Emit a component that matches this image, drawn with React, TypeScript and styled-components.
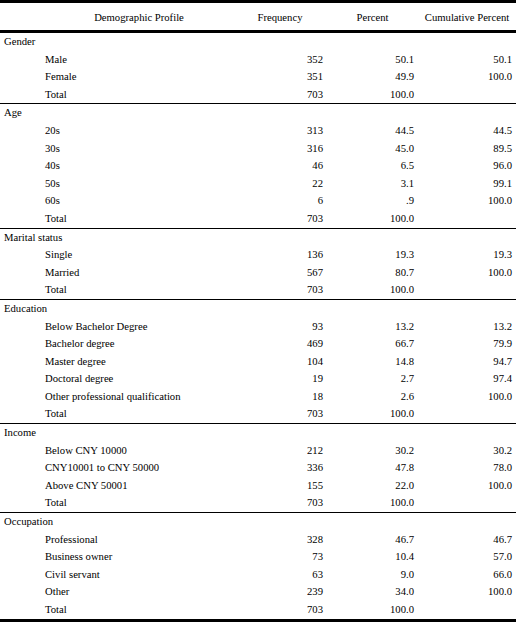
import React from "react";
import styled, { createGlobalStyle } from "styled-components";

const GlobalStyle = createGlobalStyle`
  html, body { margin: 0; padding: 0; background: #ffffff; }
`;

const COLS = "233px 94px 91px 98px";

const Table = styled.div`
  width: 516px;
  font-family: "Liberation Serif", "DejaVu Serif", serif;
  font-size: 10.67px;
  color: #000;
  border-top: 3px solid #000;
  border-bottom: 3px solid #000;
`;

const HeaderRow = styled.div`
  display: grid;
  grid-template-columns: ${COLS};
  height: 27px;
  align-items: center;
  border-bottom: 3px solid #000;
`;

const HeadCell = styled.div<{ $inset?: number }>`
  text-align: center;
  padding-left: ${(p) => p.$inset ?? 0}px;
  white-space: nowrap;
`;

const Section = styled.div<{ $last?: boolean }>`
  border-bottom: ${(p) => (p.$last ? "none" : "1px solid #000")};
`;

const CategoryRow = styled.div`
  height: 17.6px;
  line-height: 17.6px;
  padding-left: 4px;
  white-space: nowrap;
`;

const DataRow = styled.div`
  display: grid;
  grid-template-columns: ${COLS};
  height: 17.6px;
  line-height: 17.6px;
`;

const LabelCell = styled.div`
  padding-left: 45px;
  white-space: nowrap;
`;

const NumCell = styled.div`
  text-align: right;
  padding-right: 4px;
`;

type Row = [string, string, string, string];
type Sect = { title: string; rows: Row[] };

const sections: Sect[] = [
  {
    title: "Gender",
    rows: [
      ["Male", "352", "50.1", "50.1"],
      ["Female", "351", "49.9", "100.0"],
      ["Total", "703", "100.0", ""],
    ],
  },
  {
    title: "Age",
    rows: [
      ["20s", "313", "44.5", "44.5"],
      ["30s", "316", "45.0", "89.5"],
      ["40s", "46", "6.5", "96.0"],
      ["50s", "22", "3.1", "99.1"],
      ["60s", "6", ".9", "100.0"],
      ["Total", "703", "100.0", ""],
    ],
  },
  {
    title: "Marital status",
    rows: [
      ["Single", "136", "19.3", "19.3"],
      ["Married", "567", "80.7", "100.0"],
      ["Total", "703", "100.0", ""],
    ],
  },
  {
    title: "Education",
    rows: [
      ["Below Bachelor Degree", "93", "13.2", "13.2"],
      ["Bachelor degree", "469", "66.7", "79.9"],
      ["Master degree", "104", "14.8", "94.7"],
      ["Doctoral degree", "19", "2.7", "97.4"],
      ["Other professional qualification", "18", "2.6", "100.0"],
      ["Total", "703", "100.0", ""],
    ],
  },
  {
    title: "Income",
    rows: [
      ["Below CNY 10000", "212", "30.2", "30.2"],
      ["CNY10001 to CNY 50000", "336", "47.8", "78.0"],
      ["Above CNY 50001", "155", "22.0", "100.0"],
      ["Total", "703", "100.0", ""],
    ],
  },
  {
    title: "Occupation",
    rows: [
      ["Professional", "328", "46.7", "46.7"],
      ["Business owner", "73", "10.4", "57.0"],
      ["Civil servant", "63", "9.0", "66.0"],
      ["Other", "239", "34.0", "100.0"],
      ["Total", "703", "100.0", ""],
    ],
  },
];

export default function App() {
  return (
    <>
      <GlobalStyle />
      <Table>
        <HeaderRow>
          <HeadCell $inset={45}>Demographic Profile</HeadCell>
          <HeadCell>Frequency</HeadCell>
          <HeadCell>Percent</HeadCell>
          <HeadCell>Cumulative Percent</HeadCell>
        </HeaderRow>
        {sections.map((s, i) => (
          <Section key={s.title} $last={i === sections.length - 1}>
            <CategoryRow>{s.title}</CategoryRow>
            {s.rows.map((r) => (
              <DataRow key={r[0]}>
                <LabelCell>{r[0]}</LabelCell>
                <NumCell>{r[1]}</NumCell>
                <NumCell>{r[2]}</NumCell>
                <NumCell>{r[3]}</NumCell>
              </DataRow>
            ))}
          </Section>
        ))}
      </Table>
    </>
  );
}
